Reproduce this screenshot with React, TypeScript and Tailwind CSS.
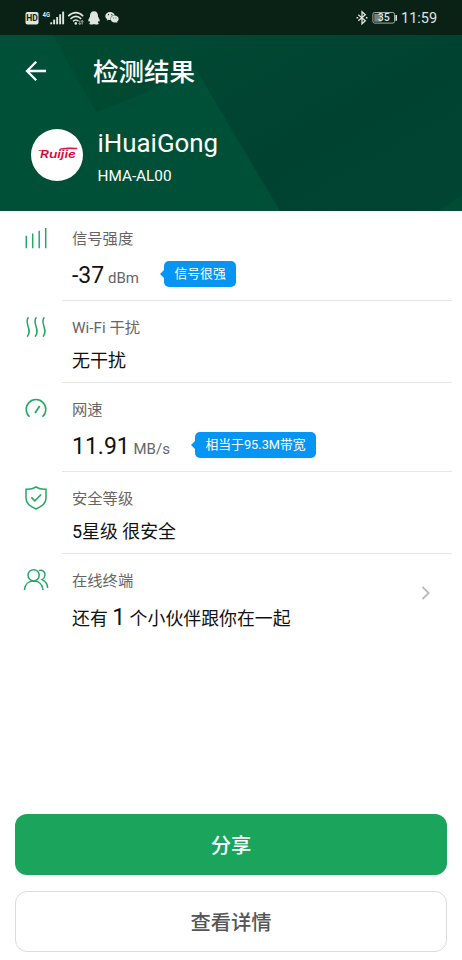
import type { ReactNode } from 'react';
import { FaWeixin } from 'react-icons/fa';

function StatusBar() {
  return (
    <div className="flex h-[35px] items-center justify-between bg-[#0a2116] pl-[25px] pr-[25px] text-[#dfe5e1]">
      <div className="flex h-[14px] items-center">
        <svg width="60" height="16" viewBox="0 0 60 16" fill="none">
          <rect x="0.5" y="2" width="13" height="12.5" rx="2" fill="#dfe5e1" />
          <text x="7" y="11.3" fontSize="8.5" fontWeight="700" textAnchor="middle" fill="#0a2116" fontFamily="Roboto, sans-serif">HD</text>
          <text x="17.6" y="7.3" fontSize="7.6" fontWeight="700" fill="#dfe5e1" fontFamily="Roboto, sans-serif" textLength="7.5" lengthAdjust="spacingAndGlyphs">4G</text>
          <g fill="#dfe5e1">
            <rect x="25.3" y="12.3" width="1.9" height="2" />
            <rect x="28.2" y="9.6" width="1.9" height="4.7" />
            <rect x="31.2" y="7" width="1.9" height="7.3" />
            <rect x="34.2" y="4.3" width="1.9" height="10" />
            <rect x="37.2" y="1.6" width="1.9" height="12.7" />
          </g>
          <g stroke="#dfe5e1" strokeWidth="1.6">
            <path d="M43.2 6.2Q51 -.8 58.2 6.2" />
            <path d="M45.5 8.8Q51 4 56.2 8.8" />
            <path d="M48 11.3Q51 8.7 53.6 11.3" />
          </g>
          <circle cx="50.8" cy="13.4" r="1.3" fill="#dfe5e1" />
          <path d="M54.8 10.5v4M53.6 13.2l1.2 1.3 1.2-1.3M57.2 14.5v-4M56 11.8l1.2-1.3 1.2 1.3" stroke="#dfe5e1" strokeWidth=".7" />
        </svg>
        <svg width="12" height="16" viewBox="0 0 12 16" className="ml-[3px]" fill="#dfe5e1">
          <path d="M6 1.3C3.3 1.3 1.8 3.3 2 6.4L.5 9.4c-.6 1.6-.1 2.7 1 1.6l.7 1.5c-1.7 1-.8 2.1 1 2.1 1.3 0 2.1-.3 2.8-.7.7.4 1.5.7 2.8.7 1.8 0 2.7-1.1 1-2.1l.7-1.5c1.1 1.1 1.6 0 1-1.6L10 6.4c.2-3.1-1.3-5.1-4-5.1Z" />
        </svg>
        <FaWeixin className="ml-[5px] h-[15px] w-[14px]" />
      </div>
      <div className="flex items-center">
        <svg width="12" height="16" viewBox="0 0 12 16" fill="none" stroke="#dfe5e1" strokeWidth="1.3">
          <path d="M2.3 4.7l7 6-3.3 3V1.8l3.3 3-7 6" />
          <path d="M.5 7.8h1.7M9.8 7.8h1.7" strokeWidth="1.6" />
        </svg>
        <svg width="26" height="14" viewBox="0 0 26 14" className="ml-[4px]" fill="none">
          <rect x=".9" y="1.5" width="21.6" height="10.6" rx="1.7" stroke="#a1aea6" strokeWidth="1" />
          <rect x="2.2" y="2.8" width="7.2" height="8" fill="#758078" />
          <path d="M24.2 4v5.8" stroke="#dfe5e1" strokeWidth="1.6" />
          <text x="11.8" y="10.4" fontSize="10.5" fontWeight="500" textAnchor="middle" fill="#dfe5e1" fontFamily="Roboto, sans-serif">35</text>
        </svg>
        <span className="ml-[3px] w-[36px] whitespace-nowrap pt-[3px] text-[14.5px] leading-none">11:59</span>
      </div>
    </div>
  );
}

function Header() {
  return (
    <header className="relative h-[176px] overflow-hidden bg-[#005037]">
      <svg className="absolute inset-0" width="462" height="176" viewBox="0 0 462 176">
        <defs>
          <linearGradient id="shade" x1="0" y1="0" x2="1" y2="0">
            <stop offset="0" stopColor="#004a31" />
            <stop offset=".3" stopColor="#004832" />
            <stop offset=".65" stopColor="#004430" />
            <stop offset="1" stopColor="#004933" />
          </linearGradient>
          <linearGradient id="facet" x1="0" y1="0" x2=".9" y2="1">
            <stop offset="0" stopColor="#004933" />
            <stop offset=".55" stopColor="#004230" />
            <stop offset="1" stopColor="#004532" />
          </linearGradient>
        </defs>
        <path d="M53 0H462V176H280L196 34 140 60 96 77Z" fill="url(#shade)" />
        <path d="M176 0H462V176H280Z" fill="url(#facet)" />
        <path d="M438 176L462 160V176Z" fill="#004b34" />
      </svg>
      <div className="relative flex h-[74px] items-center pl-[25px]">
        <svg width="22" height="22" viewBox="0 0 22 22" className="-mt-[2px]" fill="none" stroke="#fff" strokeWidth="2.3">
          <path d="M21 11H2.5M11.2 1.8L2 11l9.2 9.2" />
        </svg>
        <h1 className="ml-[46px] pt-[2px] text-[25.5px] font-medium leading-none text-white">检测结果</h1>
      </div>
      <div className="relative flex items-start pl-[31px] pt-[20px]">
        <div className="flex size-[52px] items-center justify-center rounded-full bg-white">
          <svg width="44" height="18" viewBox="0 0 44 18">
            <text x="5" y="12.2" fontSize="11" fontWeight="600" fontStyle="italic" fill="#d60b3b" fontFamily="Inter, sans-serif" textLength="36" lengthAdjust="spacingAndGlyphs">Ruijie</text>
            <path d="M3.5 4.5H12M25 2.9Q33 1.2 42 2.2L41.6 3Q33 2.2 24.6 3.3Z" fill="#d60b3b" stroke="#d60b3b" strokeWidth=".7" />
          </svg>
        </div>
        <div className="ml-[14.5px] -mt-[3px] text-white">
          <div className="text-[25.9px] leading-[34px]">iHuaiGong</div>
          <div className="mt-[7px] text-[15.3px] leading-[18px]">HMA-AL00</div>
        </div>
      </div>
    </header>
  );
}

function Tag({ children }: { children: ReactNode }) {
  return (
    <span className="flex h-[26px] items-center">
      <svg width="4" height="8" viewBox="0 0 4 8"><path d="M4 0L0 4l4 4Z" fill="#0795f5" /></svg>
      <span className="flex h-[26px] items-center rounded-[5px] bg-[#0795f5] px-[10.5px] text-[12.8px] leading-none text-white">{children}</span>
    </span>
  );
}

const icons = {
  signal: <path d="M2.3 8.7V21.2M8.7 6.4V21.2M15.2 3.7V21.2M21.7 1V21.2" />,
  waves: <path d="M4.5 1.3C-.7 7.5 9.3 13.5 3.2 20.8M12.4 1.3C7.2 7.5 17.2 13.5 11.1 20.8M20.3 1.3C15.1 7.5 25.1 13.5 19 20.8" />,
  speed: <><path d="M5.6 18.8A9.8 9.8 0 1 1 18.4 18.8" /><path d="M11 15l4.7-7" strokeWidth="1.8" /></>,
  shield: <><path d="M12 0C8.5 2.2 5.5 2.6 2 2.3v9c0 5.8 5.2 8.7 10 10.7 4.8-2 10-4.9 10-10.7v-9c-3.5.3-6.5-.1-10-2.3Z" /><path d="M7.3 10.3l3.6 3.6 6.2-6.4" strokeWidth="1.7" /></>,
  people: <><circle cx="9.6" cy="6.3" r="5.6" /><path d="M.4 21C.8 15 4.7 11.9 9.6 11.9S18.5 15 19 21M14.8 1.6c3.8-1.2 6.4 1.2 6.2 4.6-.2 2.1-1.4 3.6-3 4.4 3.4 1.5 5.4 4.2 5.7 8.4" /></>,
};

function Row({ icon, label, height, children, last }: { icon: keyof typeof icons; label: string; height: string; children: ReactNode; last?: boolean }) {
  return (
    <section className={`flex ${height}`}>
      <div className="w-[62px] shrink-0 pl-[24px] pt-[15px]">
        <svg width="24" height="24" viewBox="0 0 24 24" fill="none" stroke="#27a765" strokeWidth="1.5" className="overflow-visible">{icons[icon]}</svg>
      </div>
      <div className={`mr-[10px] flex-1 pl-[10px] pt-[17px] ${last ? '' : 'border-b border-[#e7e7e7]'}`}>
        <div className="text-[15.3px] leading-[20px] text-[#666]">{label}</div>
        {children}
      </div>
    </section>
  );
}

export default function App() {
  return (
    <div className="flex h-[960px] w-[462px] flex-col overflow-hidden bg-white font-[Roboto,'Noto_Sans_CJK_SC',sans-serif]">
      <StatusBar />
      <Header />
      <main className="flex-1 pt-px">
        <Row icon="signal" label="信号强度" height="h-[89px]">
          <div className="flex h-[50px] items-center">
            <span className="w-[88px] whitespace-nowrap pt-[4px] text-[15px] text-[#666]"><span className="text-[23px] text-[#111]">-37</span> dBm</span>
            <Tag>信号很强</Tag>
          </div>
        </Row>
        <Row icon="waves" label="Wi-Fi 干扰" height="h-[82px]">
          <div className="mt-[10px] text-[18px] leading-[26px] text-[#111]">无干扰</div>
        </Row>
        <Row icon="speed" label="网速" height="h-[89px]">
          <div className="flex h-[50px] items-center">
            <span className="w-[119px] whitespace-nowrap pt-[5px] text-[15px] text-[#666]"><span className="text-[23px] text-[#111]">11.91</span> MB/s</span>
            <Tag>相当于95.3M带宽</Tag>
          </div>
        </Row>
        <Row icon="shield" label="安全等级" height="h-[82px]">
          <div className="mt-[10px] text-[17.9px] leading-[26px] text-[#111]">5星级 很安全</div>
        </Row>
        <Row icon="people" label="在线终端" height="h-[90px]" last>
          <div className="flex items-start">
            <div className="mt-[12px] flex-1 text-[17.9px] leading-[30px] text-[#111]">还有 <span className="text-[23px]">1</span> 个小伙伴跟你在一起</div>
            <svg width="10" height="14" viewBox="0 0 10 14" className="mr-[21px] mt-[-5px]" fill="none" stroke="#bbb" strokeWidth="1.8"><path d="M1.5 1l6.2 6-6.2 6" /></svg>
          </div>
        </Row>
      </main>
      <footer className="flex flex-col gap-[16px] px-[15px] pb-[8px]">
        <button className="h-[61px] rounded-[12px] bg-[#1ba45b] pt-[3px] text-[20.3px] font-medium text-white">分享</button>
        <button className="h-[61px] rounded-[12px] border border-[#dcdcdc] bg-white pt-[4px] text-[20.3px] font-medium text-[#555]">查看详情</button>
      </footer>
    </div>
  );
}
